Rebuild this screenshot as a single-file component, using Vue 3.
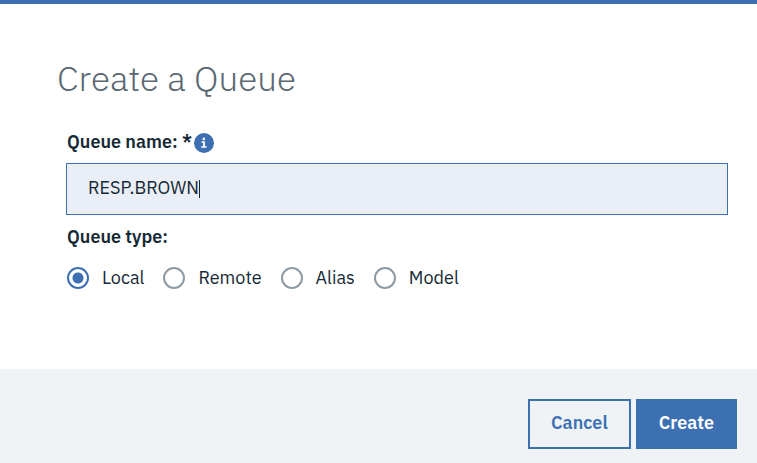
<script setup>
import { nextTick, onMounted, ref, watch } from 'vue'

const name = ref('RESP.BROWN')
const type = ref('Local')
const types = ['Local', 'Remote', 'Alias', 'Model']
const field = ref(null)
const textWidth = ref(0)

// Width of the typed text, which places the insertion caret after it
function measure() {
  const style = getComputedStyle(field.value)
  const context = document.createElement('canvas').getContext('2d')
  context.font = `${style.fontWeight} ${style.fontSize} ${style.fontFamily}`
  textWidth.value = Math.round(context.measureText(name.value).width)
}

onMounted(measure)
watch(name, () => nextTick(measure))
</script>

<template>
  <form class="dialog" @submit.prevent>
    <main class="content">
      <h1 class="title">Create a Queue</h1>
      <div class="fields">
        <div class="label-row">
          <label class="label" for="queue-name">Queue name: *</label>
          <svg class="info" viewBox="0 0 20 20" aria-hidden="true">
            <circle cx="10" cy="10" r="10" fill="#3d70b2" />
            <circle cx="9.8" cy="5.9" r="1.3" fill="#fff" />
            <path d="M7.5 8.2h3.4v5h1.7v1.6H7.2v-1.6H9V9.7H7.5z" fill="#fff" />
          </svg>
        </div>
        <div class="input-wrap">
          <input id="queue-name" ref="field" v-model="name" class="input" type="text" autocomplete="off" spellcheck="false" required />
          <span class="caret" :style="{ '--text-width': textWidth + 'px' }"></span>
        </div>
        <fieldset class="types">
          <legend class="label">Queue type:</legend>
          <div class="options">
            <label v-for="item in types" :key="item" class="option">
              <input v-model="type" class="radio" type="radio" name="queue-type" :value="item" />
              <span>{{ item }}</span>
            </label>
          </div>
        </fieldset>
      </div>
    </main>
    <footer class="footer">
      <button class="button secondary" type="button">Cancel</button>
      <button class="button primary" type="submit">Create</button>
    </footer>
  </form>
</template>

<style>
body {
  margin: 0;
  background: #fff;
}
</style>

<style scoped>
.dialog {
  display: flex;
  flex-direction: column;
  box-sizing: border-box;
  min-height: 100vh;
  border-top: 4px solid #3d70b2;
  color: #152935;
  font-family: "IBM Plex Sans", Roboto, "Liberation Sans", sans-serif;
  font-size: 18px;
  line-height: 24px;
}
.content {
  flex: 1;
  padding: 50px 29px 0 57px;
}
.title {
  margin: 0;
  color: #5a6872;
  font-size: 35px;
  font-weight: 300;
  line-height: 48px;
}
.fields {
  padding: 28px 0 0 9px;
}
.label-row {
  display: flex;
  align-items: center;
  gap: 2px;
  padding-left: 1px;
}
.label {
  font-weight: 600;
}
.info {
  width: 20px;
  height: 20px;
  margin-top: 2px;
}
.input-wrap {
  position: relative;
  margin-top: 9px;
}
.input {
  display: block;
  box-sizing: border-box;
  width: 100%;
  height: 52px;
  margin: 0;
  padding: 0 21px 4px;
  border: 1px solid #3d70b2;
  border-radius: 0;
  outline: 0;
  background: #eaeef6;
  color: inherit;
  font: inherit;
  caret-color: transparent;
}
.caret {
  position: absolute;
  top: 17px;
  left: calc(22px + var(--text-width));
  width: 1px;
  height: 18px;
  background: #152935;
  pointer-events: none;
}
.types {
  min-width: 0;
  margin: 0;
  padding: 10px 0 0 1px;
  border: 0;
}
.types .label {
  padding: 10px 0 0;
}
.options {
  display: flex;
  flex-wrap: wrap;
  gap: 19px;
  padding-top: 7px;
}
.option {
  display: flex;
  align-items: center;
  gap: 13px;
}
.radio {
  appearance: none;
  box-sizing: border-box;
  width: 22px;
  height: 22px;
  margin: 0;
  border: 2px solid #8c9ba5;
  border-radius: 50%;
  background: #fff;
}
.radio:checked {
  border-color: #3d70b2;
  background: radial-gradient(circle, #3d70b2 5px, #fff 6px);
}
.footer {
  display: flex;
  justify-content: flex-end;
  gap: 5px;
  padding: 30px 20px 14px;
  background: #eff3f6;
}
.button {
  height: 50px;
  margin: 0;
  padding: 0 21px 2px;
  border: 2px solid #3d70b2;
  border-radius: 0;
  font: inherit;
  font-weight: 600;
}
.secondary {
  background: transparent;
  color: #3d70b2;
}
.primary {
  background: #3d70b2;
  color: #fff;
}
</style>
